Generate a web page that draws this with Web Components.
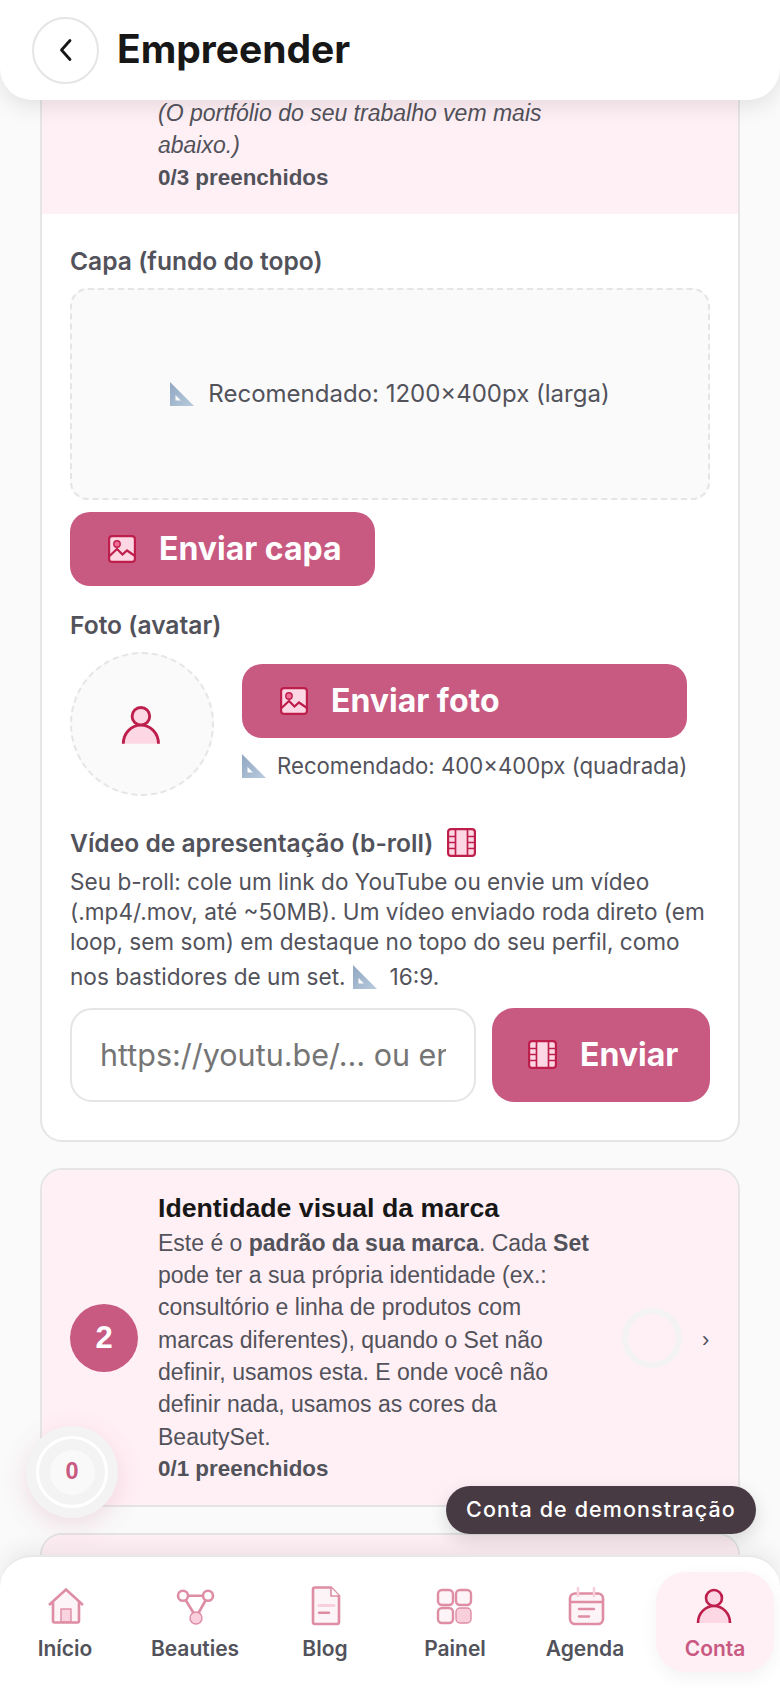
<!DOCTYPE html>
<html lang="pt-BR">
<head>
<meta charset="utf-8">
<title>Empreender</title>
<style>
  html, body { margin: 0; height: 1688px; overflow: hidden; background: #fafafa; }
  body { position: relative; font-family: Inter, "Liberation Sans", sans-serif; color: #52525b; }
  main { display: flex; flex-direction: column; gap: 26px; padding: 0 40px; }
</style>
</head>
<body>
<bs-header>Empreender</bs-header>

<main>
  <bs-step open>
    <i slot="note">(O portfólio do seu trabalho vem mais abaixo.)</i>
    <span slot="progress">0/3 preenchidos</span>
    <bs-profile></bs-profile>
  </bs-step>

  <bs-step number="2" ring>
    <span slot="title">Identidade visual da marca</span>
    <span slot="note">Este é o <b>padrão da sua marca</b>. Cada <b>Set</b> pode ter a sua própria identidade (ex.: consultório e linha de produtos com marcas diferentes), quando o Set não definir, usamos esta. E onde você não definir nada, usamos as cores da BeautySet.</span>
    <span slot="progress">0/1 preenchidos</span>
  </bs-step>

  <bs-step></bs-step>
</main>

<bs-fab>0</bs-fab>
<bs-pill>Conta de demonstração</bs-pill>

<bs-nav>
  <bs-nav-item icon="home">Início</bs-nav-item>
  <bs-nav-item icon="graph">Beauties</bs-nav-item>
  <bs-nav-item icon="doc">Blog</bs-nav-item>
  <bs-nav-item icon="grid">Painel</bs-nav-item>
  <bs-nav-item icon="calendar">Agenda</bs-nav-item>
  <bs-nav-item icon="person" active>Conta</bs-nav-item>
</bs-nav>

<script>
const STROKE = "#be1e4b";
const FILL = "#fdd7e4";
const ACCENT = "#f06d98";

const ICONS = {
  image: `<rect x="1.1" y="1.1" width="25.8" height="25.8" rx="3" fill="${FILL}" stroke="${STROKE}" stroke-width="2.2"/>
    <circle cx="9" cy="9" r="3.2" fill="${ACCENT}" stroke="${STROKE}" stroke-width="1.4"/>
    <path d="M1.5 21 L9 14 L14.5 19.5 L19 15.5 L27 21" fill="none" stroke="${STROKE}" stroke-width="2.2"/>`,
  film: `<rect x="1.1" y="1.1" width="26.8" height="26.8" rx="3" fill="${FILL}" stroke="${STROKE}" stroke-width="2.2"/>
    <path d="M8.5 1V28M20.5 1V28M1 8.5H8.5M1 14.5H8.5M1 20.5H8.5M20.5 8.5H28M20.5 14.5H28M20.5 20.5H28" fill="none" stroke="${STROKE}" stroke-width="1.7"/>`,
  ruler: `<defs><linearGradient id="r" x1="0" y1="0" x2="1" y2="1"><stop offset="0" stop-color="#8fa6c1"/><stop offset="1" stop-color="#b9cbdd"/></linearGradient></defs>
    <path fill="url(#r)" fill-rule="evenodd" d="M0 0 L24 24 H0 Z M5.5 13 V18.5 H11 Z"/>`,
  home: `<path d="M8 19 V36 a1.5 1.5 0 0 0 1.5 1.5 H32.5 a1.5 1.5 0 0 0 1.5 -1.5 V19 L21 6 Z" fill="#fdeaf0" stroke="none"/>
    <rect x="16" y="24" width="10" height="13" fill="#f6a9c2" stroke="${STROKE}" stroke-width="1.4"/>
    <path d="M4 20 L21 4.5 L38 20 M8 17 V36 a1.5 1.5 0 0 0 1.5 1.5 H32.5 a1.5 1.5 0 0 0 1.5 -1.5 V17" fill="none" stroke="${STROKE}" stroke-width="2.6"/>`,
  graph: `<path d="M13 10.7 H28 M11 15.5 L18.5 28 M30.5 15.5 L23.5 28" fill="none" stroke="${STROKE}" stroke-width="2.6"/>
    <circle cx="8" cy="10.7" r="5" fill="#fff" stroke="${STROKE}" stroke-width="2.6"/>
    <circle cx="33" cy="10.7" r="5" fill="#fff" stroke="${STROKE}" stroke-width="2.6"/>
    <circle cx="21" cy="33" r="6" fill="#f6a0bc" stroke="${STROKE}" stroke-width="1.4"/>`,
  doc: `<path d="M10 2.5 H26 L34 11 V37 a2 2 0 0 1 -2 2 H10 a2 2 0 0 1 -2 -2 V4.5 a2 2 0 0 1 2 -2 Z" fill="#fdeaf0" stroke="${STROKE}" stroke-width="2.6"/>
    <path d="M26 2.5 V11 H34" fill="#fff" stroke="${STROKE}" stroke-width="1.6"/>
    <path d="M14 20.5 H29" stroke="#f6a0bc" stroke-width="3" stroke-linecap="round"/>
    <path d="M14 27.7 H24" stroke="${STROKE}" stroke-width="2.4" stroke-linecap="round"/>`,
  grid: `<rect x="3" y="5" width="15" height="15" rx="4" fill="#fdeaf0" stroke="${STROKE}" stroke-width="2.4"/>
    <rect x="21" y="5" width="15" height="15" rx="4" fill="#fdeaf0" stroke="${STROKE}" stroke-width="2.4"/>
    <rect x="3" y="23" width="15" height="15" rx="4" fill="#fdeaf0" stroke="${STROKE}" stroke-width="2.4"/>
    <rect x="21" y="23" width="15" height="15" rx="4" fill="#f6a0bc" stroke="${STROKE}" stroke-width="1.4"/>`,
  calendar: `<rect x="5" y="8.5" width="33" height="30.5" rx="5" fill="#fdeaf0" stroke="${STROKE}" stroke-width="2.6"/>
    <path d="M5 17 H38" stroke="${STROKE}" stroke-width="2.6"/>
    <path d="M13 2 V12 M29 2 V12" stroke="#f6a0bc" stroke-width="2.4"/>
    <path d="M14 24 H29 M14 31.5 H24" stroke="${STROKE}" stroke-width="2.4" stroke-linecap="round"/>`,
  person: `<circle cx="19" cy="13" r="8" fill="${FILL}" stroke="${STROKE}" stroke-width="2.6"/>
    <path d="M3 38 A16 17 0 0 1 35 38 Z" fill="${FILL}" stroke="none"/>
    <path d="M3 38 A16 17 0 0 1 35 38" fill="none" stroke="${STROKE}" stroke-width="2.6"/>`
};

const BOX = { image: 28, film: 29, ruler: 24 };

class BsIcon extends HTMLElement {
  connectedCallback() {
    const name = this.getAttribute("name");
    const box = BOX[name] || 40;
    const size = this.getAttribute("size") || box;
    this.attachShadow({ mode: "open" }).innerHTML = `
      <style>
        :host { display: inline-flex; flex: none; }
        svg { display: block; overflow: visible; }
      </style>
      <svg width="${size}" height="${size}" viewBox="0 0 ${box} ${box}">${ICONS[name]}</svg>`;
  }
}

class BsHeader extends HTMLElement {
  connectedCallback() {
    this.attachShadow({ mode: "open" }).innerHTML = `
      <style>
        :host {
          position: absolute; top: 0; left: 0; right: 0; z-index: 5;
          display: flex; align-items: center; gap: 18px;
          height: 100px; box-sizing: border-box; padding: 0 32px;
          background: #fff; border-radius: 0 0 32px 32px;
          box-shadow: 0 6px 22px rgba(0,0,0,.1);
        }
        button {
          width: 67px; height: 67px; border-radius: 50%; padding: 0;
          display: flex; align-items: center; justify-content: center;
          background: #fff; border: 2px solid #e5e5e5;
        }
        h1 { margin: 0 0 4px; font: 700 39px/1 Inter, "Liberation Sans", sans-serif; color: #171717; }
      </style>
      <button aria-label="Voltar">
        <svg width="24" height="24" viewBox="0 0 24 24" fill="none" stroke="#171717" stroke-width="2.8" stroke-linecap="round" stroke-linejoin="round"><path d="M16 2.5 L7.5 12 L16 21.5"/></svg>
      </button>
      <h1><slot></slot></h1>`;
  }
}

class BsStep extends HTMLElement {
  connectedCallback() {
    const number = this.getAttribute("number");
    const ring = this.hasAttribute("ring");
    this.attachShadow({ mode: "open" }).innerHTML = `
      <style>
        :host {
          display: block; background: #fff; overflow: hidden;
          border: 2px solid #e5e5e5; border-radius: 22px;
          font-family: "Liberation Sans", Arial, sans-serif;
        }
        :host([open]) { border-top: 0; border-radius: 0 0 22px 22px; }
        .head {
          display: flex; align-items: center; gap: 20px;
          min-height: 60px;
          padding: 20px 28px; background: #fff0f5;
        }
        :host([open]) .head { padding: 97px 28px 20px 116px; }
        .num {
          width: 68px; height: 68px; border-radius: 50%; flex: none;
          display: flex; align-items: center; justify-content: center;
          background: #c85a82; color: #fff; font-size: 31px; font-weight: 700;
        }
        .text { flex: 1; min-width: 0; padding-right: 8px; font-size: 23px; line-height: 32.3px; color: #52525b; }
        .title { font-size: 26.7px; line-height: 37px; font-weight: 700; color: #171717; }
        .progress { font-size: 22.4px; font-weight: 700; }
        .ring {
          width: 60px; height: 60px; border-radius: 50%; flex: none;
          box-sizing: border-box; border: 6px solid #f3f3f3;
        }
        .chev { flex: none; width: 8px; padding-top: 4px; font-size: 22px; color: #52525b; }
        :host([open]) .text { max-width: 436px; }
      </style>
      <div class="head">
        ${number ? `<div class="num">${number}</div>` : ""}
        <div class="text">
          <div class="title"><slot name="title"></slot></div>
          <div><slot name="note"></slot></div>
          <div class="progress"><slot name="progress"></slot></div>
        </div>
        ${ring ? `<div class="ring"></div><div class="chev">›</div>` : ""}
      </div>
      <slot></slot>`;
  }
}

class BsButton extends HTMLElement {
  connectedCallback() {
    const icon = this.getAttribute("icon");
    this.attachShadow({ mode: "open" }).innerHTML = `
      <style>
        :host {
          display: inline-flex; align-items: center; gap: 23px; box-sizing: border-box;
          height: 74px; padding: 0 33px 0 38px; border-radius: 20px;
          background: #c85a82; color: #fff;
          font: 700 32px/1 Inter, "Liberation Sans", sans-serif;
        }
      </style>
      <bs-icon name="${icon}"></bs-icon><span><slot></slot></span>`;
  }
}

class BsProfile extends HTMLElement {
  connectedCallback() {
    this.attachShadow({ mode: "open" }).innerHTML = `
      <style>
        :host {
          display: flex; flex-direction: column; padding: 32px 28px 38px;
          font-family: Inter, "Liberation Sans", sans-serif; color: #52525b;
        }
        .label { font-size: 24.6px; line-height: 30px; font-weight: 600; }
        .hint { font-size: 24px; }
        .drop {
          height: 212px; margin-top: 12px; box-sizing: border-box;
          display: flex; align-items: center; justify-content: center; gap: 14px;
          background: #fafafa; border: 2px dashed #e5e5e5; border-radius: 18px;
        }
        .cap { align-self: flex-start; margin-top: 12px; }
        .mt24 { margin-top: 24px; }
        .avatar-row { display: flex; align-items: flex-start; gap: 28px; margin-top: 12px; }
        .avatar {
          width: 144px; height: 144px; flex: none; box-sizing: border-box;
          display: flex; align-items: center; justify-content: center;
          background: #fafafa; border: 2px dashed #e5e5e5; border-radius: 50%;
        }
        .col { display: flex; flex-direction: column; gap: 16px; margin-top: 12px; }
        .col bs-button { display: flex; }
        .hint-row { display: flex; align-items: center; gap: 11px; font-size: 22.2px; line-height: 24px; white-space: nowrap; }
        .video { display: flex; align-items: center; gap: 14px; margin-top: 32px; }
        .desc { margin: 9px 0 0; font-size: 22.6px; line-height: 30px; }
        .desc-end { display: flex; align-items: center; margin-top: 5px; font-size: 22.6px; line-height: 30px; }
        .desc-end bs-icon { margin: 0 13px 0 7px; }
        .send { display: flex; gap: 16px; margin-top: 16px; }
        input {
          flex: 1; min-width: 0; height: 94px; box-sizing: border-box; padding: 0 28px;
          border: 2px solid #e5e5e5; border-radius: 22px; background: #fff; outline: 0;
          font: 400 30.5px Inter, "Liberation Sans", sans-serif;
        }
        input::placeholder { color: #757575; opacity: 1; }
        .send bs-button { height: 94px; width: 218px; border-radius: 22px; padding: 0 34px 0 36px; gap: 23px; }
      </style>
      <div class="label">Capa (fundo do topo)</div>
      <div class="drop"><bs-icon name="ruler"></bs-icon><span class="hint">Recomendado: 1200×400px (larga)</span></div>
      <bs-button class="cap" icon="image">Enviar capa</bs-button>

      <div class="label mt24">Foto (avatar)</div>
      <div class="avatar-row">
        <div class="avatar"><bs-icon name="person" size="44"></bs-icon></div>
        <div class="col">
          <bs-button icon="image">Enviar foto</bs-button>
          <div class="hint-row"><bs-icon name="ruler"></bs-icon><span>Recomendado: 400×400px (quadrada)</span></div>
        </div>
      </div>

      <div class="label video">Vídeo de apresentação (b-roll) <bs-icon name="film"></bs-icon></div>
      <p class="desc">Seu b-roll: cole um link do YouTube ou envie um vídeo (.mp4/.mov, até ~50MB). Um vídeo enviado roda direto (em loop, sem som) em destaque no topo do seu perfil, como</p>
      <div class="desc-end"><span>nos bastidores de um set.</span><bs-icon name="ruler"></bs-icon><span>16:9.</span></div>
      <div class="send">
        <input type="text" placeholder="https://youtu.be/… ou enviar">
        <bs-button icon="film">Enviar</bs-button>
      </div>`;
  }
}

class BsFab extends HTMLElement {
  connectedCallback() {
    this.attachShadow({ mode: "open" }).innerHTML = `
      <style>
        :host {
          position: absolute; left: 26px; top: 1426px; z-index: 4;
          width: 92px; height: 92px; border-radius: 50%; background: #f3f3f3;
          display: flex; align-items: center; justify-content: center;
          box-shadow: 0 8px 26px rgba(190,90,125,.18);
        }
        .ring {
          width: 72px; height: 72px; box-sizing: border-box; border-radius: 50%;
          border: 3.5px solid #fff; display: flex; align-items: center; justify-content: center;
        }
        .core {
          width: 45px; height: 45px; border-radius: 50%; background: #f9f9f9;
          display: flex; align-items: center; justify-content: center;
          font: 700 23.5px/1 "Liberation Sans", sans-serif; color: #c85a82;
        }
      </style>
      <div class="ring"><div class="core"><slot></slot></div></div>`;
  }
}

class BsPill extends HTMLElement {
  connectedCallback() {
    this.attachShadow({ mode: "open" }).innerHTML = `
      <style>
        :host {
          position: absolute; left: 446px; top: 1486px; z-index: 6;
          width: 310px; height: 48px; border-radius: 24px; box-sizing: border-box;
          display: flex; align-items: center; justify-content: center;
          background: rgba(66,52,61,.97); color: #fff;
          font: 500 21.5px/1 Inter, "Liberation Sans", sans-serif; letter-spacing: 1.1px;
          box-shadow: 0 6px 18px rgba(0,0,0,.14);
        }
      </style>
      <slot></slot>`;
  }
}

class BsNav extends HTMLElement {
  connectedCallback() {
    this.attachShadow({ mode: "open" }).innerHTML = `
      <style>
        :host {
          position: absolute; left: 0; right: 0; bottom: 0; z-index: 5;
          display: grid; grid-template-columns: repeat(6, 1fr);
          height: 133px; box-sizing: border-box; padding: 15px 0 16px;
          background: #fff; border-top: 2px solid #e8e8e8; border-radius: 32px 32px 0 0;
          box-shadow: 0 -6px 22px rgba(0,0,0,.07);
        }
      </style>
      <slot></slot>`;
  }
}

class BsNavItem extends HTMLElement {
  connectedCallback() {
    this.attachShadow({ mode: "open" }).innerHTML = `
      <style>
        :host {
          display: flex; flex-direction: column; align-items: center; gap: 10px;
          margin: 0 6px; padding-top: 13px; box-sizing: border-box;
          font: 600 21px/27px Inter, "Liberation Sans", sans-serif; color: #52525b;
          border-radius: 30px;
        }
        :host([active]) { background: #fff0f5; color: #c85a82; box-shadow: 0 6px 18px rgba(0,0,0,.05); }
        bs-icon { opacity: .5; }
        :host([active]) bs-icon { opacity: 1; }
      </style>
      <bs-icon name="${this.getAttribute("icon")}"></bs-icon><span><slot></slot></span>`;
  }
}

customElements.define("bs-icon", BsIcon);
customElements.define("bs-header", BsHeader);
customElements.define("bs-step", BsStep);
customElements.define("bs-button", BsButton);
customElements.define("bs-profile", BsProfile);
customElements.define("bs-fab", BsFab);
customElements.define("bs-pill", BsPill);
customElements.define("bs-nav", BsNav);
customElements.define("bs-nav-item", BsNavItem);
</script>
</body>
</html>
